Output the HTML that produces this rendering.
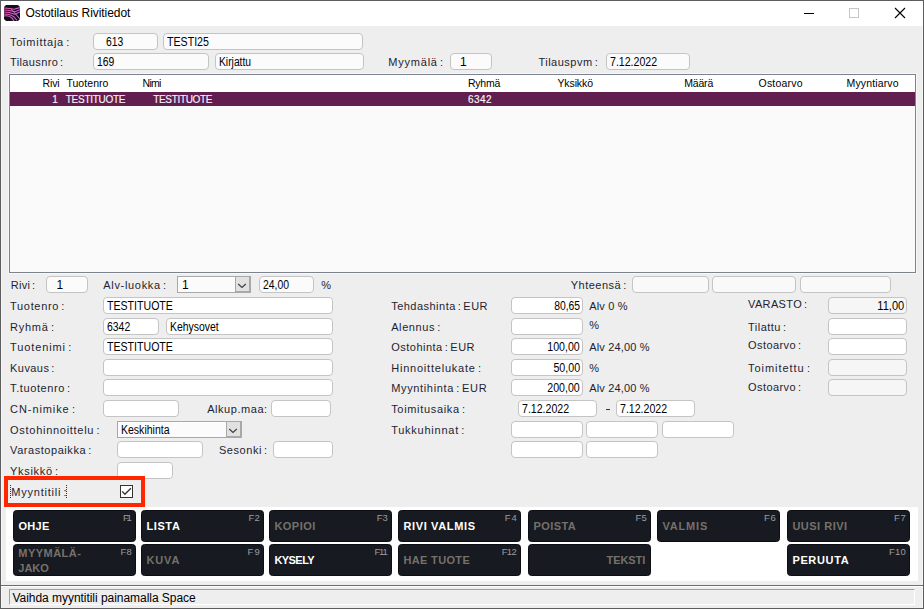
<!DOCTYPE html>
<html><head><meta charset="utf-8"><style>
html,body{margin:0;padding:0;width:924px;height:609px;overflow:hidden;background:#eeeeee}
body{position:relative;font-family:'Liberation Sans', sans-serif}
.r{position:absolute}
.tx{position:absolute;white-space:nowrap;font-family:'Liberation Sans', sans-serif}
</style></head><body>
<div class="r" style="left:0px;top:0px;width:924px;height:609px;background:#eeeeee"></div>
<div class="r" style="left:0px;top:0px;width:924px;height:26px;background:#ffffff"></div>
<div class="r" style="left:0px;top:0px;width:924px;height:1px;background:#5e5e5e"></div>
<div class="r" style="left:0px;top:0px;width:1px;height:609px;background:#5e5e5e"></div>
<div class="r" style="left:1px;top:26px;width:1px;height:582px;background:#f5f5f5"></div>
<div class="r" style="left:923px;top:0px;width:1px;height:609px;background:#5e5e5e"></div>
<div class="r" style="left:922px;top:26px;width:1px;height:582px;background:#f5f5f5"></div>
<div class="r" style="left:0px;top:608px;width:924px;height:1px;background:#5e5e5e"></div>
<svg class="r" style="left:4px;top:5px" width="16" height="16" viewBox="0 0 16 16">
<path d="M2 0 H14 L16 2 V14 L14 16 H2 L0 14 V2 Z" fill="#111116"/>
<defs><linearGradient id="ig" x1="0" x2="1"><stop offset="0" stop-color="#f058b0"/><stop offset="1" stop-color="#d060f0"/></linearGradient></defs>
<g stroke="url(#ig)" stroke-width="1.05" fill="none">
<path d="M0 3 C5 3 8 4.2 10 4.2 L16 2.6"/>
<path d="M0 5 C5 5 8 6.2 11 6.8 L16 4.8"/>
<path d="M0 7 C5 7 8 8.2 11 9.3 L16 7"/>
<path d="M0 9 C4 9 7.5 10 10 12 L13 15.5"/>
<path d="M0 11 C3 10.5 6 11 8 13.2 L10 16"/>
<path d="M7 4 C11 8 13 11 15.8 13.8"/>
</g></svg>
<div class="tx" style="left:25.50px;top:7px;font-size:12px;line-height:12px;color:#000000;letter-spacing:-0.060px;word-spacing:0px;font-weight:normal;">Ostotilaus Rivitiedot</div>
<div class="r" style="left:804px;top:13px;width:10px;height:1px;background:#000"></div>
<div class="r" style="left:849px;top:8px;width:10px;height:10px;border:1px solid #c6c6c6;box-sizing:border-box"></div>
<svg class="r" style="left:894px;top:7px" width="12" height="12" viewBox="0 0 12 12"><path d="M1 1 L11 11 M11 1 L1 11" stroke="#000" stroke-width="1.1"/></svg>
<div class="tx" style="left:10.00px;top:37px;font-size:11px;line-height:11px;color:#1e1e30;letter-spacing:0.753px;word-spacing:-1.5px;font-weight:normal;">Toimittaja :</div>
<div class="tx" style="left:10.00px;top:57px;font-size:11px;line-height:11px;color:#1e1e30;letter-spacing:0.371px;word-spacing:-1.5px;font-weight:normal;">Tilausnro :</div>
<div class="r" style="left:93px;top:33px;width:65px;height:17px;background:#fbfbfb;border:1px solid #c4c4c4;border-radius:4px;box-sizing:border-box"></div>
<div class="tx" style="left:105.60px;top:36px;font-size:12px;line-height:12px;color:#000000;letter-spacing:0.000px;word-spacing:0px;font-weight:normal;transform:scaleX(0.8650);transform-origin:0.00px 0;">613</div>
<div class="r" style="left:163px;top:33px;width:200px;height:17px;background:#fbfbfb;border:1px solid #c4c4c4;border-radius:4px;box-sizing:border-box"></div>
<div class="tx" style="left:167.00px;top:36px;font-size:12px;line-height:12px;color:#000000;letter-spacing:0.000px;word-spacing:0px;font-weight:normal;transform:scaleX(0.8851);transform-origin:0.00px 0;">TESTI25</div>
<div class="r" style="left:93px;top:53px;width:116px;height:17px;background:#fbfbfb;border:1px solid #c4c4c4;border-radius:4px;box-sizing:border-box"></div>
<div class="tx" style="left:96.60px;top:56px;font-size:12px;line-height:12px;color:#000000;letter-spacing:0.000px;word-spacing:0px;font-weight:normal;transform:scaleX(0.8650);transform-origin:0.00px 0;">169</div>
<div class="r" style="left:215px;top:53px;width:149px;height:17px;background:#fbfbfb;border:1px solid #c4c4c4;border-radius:4px;box-sizing:border-box"></div>
<div class="tx" style="left:218.60px;top:56px;font-size:12px;line-height:12px;color:#000000;letter-spacing:0.000px;word-spacing:0px;font-weight:normal;transform:scaleX(0.8589);transform-origin:0.00px 0;">Kirjattu</div>
<div class="tx" style="left:388.30px;top:57px;font-size:11px;line-height:11px;color:#1e1e30;letter-spacing:0.780px;word-spacing:-1.5px;font-weight:normal;">Myymälä :</div>
<div class="r" style="left:450px;top:53px;width:42px;height:17px;background:#fbfbfb;border:1px solid #c4c4c4;border-radius:4px;box-sizing:border-box"></div>
<div class="tx" style="left:460.00px;top:56px;font-size:12px;line-height:12px;color:#000000;letter-spacing:0.000px;word-spacing:0px;font-weight:normal;">1</div>
<div class="tx" style="left:538.40px;top:57px;font-size:11px;line-height:11px;color:#1e1e30;letter-spacing:0.503px;word-spacing:-1.5px;font-weight:normal;">Tilauspvm :</div>
<div class="r" style="left:606px;top:53px;width:84px;height:17px;background:#fbfbfb;border:1px solid #c4c4c4;border-radius:4px;box-sizing:border-box"></div>
<div class="tx" style="left:609.60px;top:56px;font-size:12px;line-height:12px;color:#000000;letter-spacing:0.000px;word-spacing:0px;font-weight:normal;transform:scaleX(0.8825);transform-origin:0.00px 0;">7.12.2022</div>
<div class="r" style="left:8px;top:73px;width:909px;height:201px;background:#f8f8f8"></div>
<div class="r" style="left:9px;top:74px;width:907px;height:199px;background:#fafafa;border:1px solid #7c828e;box-sizing:border-box"></div>
<div class="r" style="left:10px;top:75px;width:905px;height:17px;background:#ffffff"></div>
<div class="r" style="left:10px;top:92px;width:905px;height:14px;background:#631e50"></div>
<div class="tx" style="left:42.60px;top:78px;font-size:10.5px;line-height:10.5px;color:#000;letter-spacing:-0.189px;word-spacing:0px;font-weight:normal;">Rivi</div>
<div class="tx" style="left:66.40px;top:78px;font-size:10.5px;line-height:10.5px;color:#000;letter-spacing:0.058px;word-spacing:0px;font-weight:normal;">Tuotenro</div>
<div class="tx" style="left:142.60px;top:78px;font-size:10.5px;line-height:10.5px;color:#000;letter-spacing:-0.754px;word-spacing:0px;font-weight:normal;">Nimi</div>
<div class="tx" style="left:468.00px;top:78px;font-size:10.5px;line-height:10.5px;color:#000;letter-spacing:-0.230px;word-spacing:0px;font-weight:normal;">Ryhmä</div>
<div class="tx" style="left:557.40px;top:78px;font-size:10.5px;line-height:10.5px;color:#000;letter-spacing:-0.089px;word-spacing:0px;font-weight:normal;">Yksikkö</div>
<div class="tx" style="left:684.30px;top:78px;font-size:10.5px;line-height:10.5px;color:#000;letter-spacing:-0.206px;word-spacing:0px;font-weight:normal;">Määrä</div>
<div class="tx" style="left:758.50px;top:78px;font-size:10.5px;line-height:10.5px;color:#000;letter-spacing:0.220px;word-spacing:0px;font-weight:normal;">Ostoarvo</div>
<div class="tx" style="left:846.50px;top:78px;font-size:10.5px;line-height:10.5px;color:#000;letter-spacing:0.142px;word-spacing:0px;font-weight:normal;">Myyntiarvo</div>
<div class="tx" style="left:52.30px;top:95px;font-size:10px;line-height:10px;color:#f8f4f8;letter-spacing:0.000px;word-spacing:0px;font-weight:normal;-webkit-text-stroke:0.15px #f8f4f8;">1</div>
<div class="tx" style="left:65.80px;top:95px;font-size:10px;line-height:10px;color:#f8f4f8;letter-spacing:-0.284px;word-spacing:0px;font-weight:normal;-webkit-text-stroke:0.15px #f8f4f8;">TESTITUOTE</div>
<div class="tx" style="left:153.20px;top:95px;font-size:10px;line-height:10px;color:#f8f4f8;letter-spacing:-0.328px;word-spacing:0px;font-weight:normal;-webkit-text-stroke:0.15px #f8f4f8;">TESTITUOTE</div>
<div class="tx" style="left:468.00px;top:95px;font-size:10px;line-height:10px;color:#f8f4f8;letter-spacing:0.438px;word-spacing:0px;font-weight:normal;-webkit-text-stroke:0.15px #f8f4f8;">6342</div>
<div class="tx" style="left:10.70px;top:280px;font-size:11px;line-height:11px;color:#1e1e30;letter-spacing:0.282px;word-spacing:-1.5px;font-weight:normal;">Rivi :</div>
<div class="r" style="left:46px;top:276px;width:42px;height:17px;background:#fbfbfb;border:1px solid #c4c4c4;border-radius:4px;box-sizing:border-box"></div>
<div class="tx" style="left:56.50px;top:279px;font-size:12px;line-height:12px;color:#000000;letter-spacing:0.000px;word-spacing:0px;font-weight:normal;">1</div>
<div class="tx" style="left:103.30px;top:280px;font-size:11px;line-height:11px;color:#1e1e30;letter-spacing:0.673px;word-spacing:-1.5px;font-weight:normal;">Alv-luokka :</div>
<div class="r" style="left:177px;top:276px;width:74px;height:17px;background:#fbfbfb;border:1px solid #a8a8a8;box-sizing:border-box"></div>
<div class="r" style="left:178px;top:277px;width:57px;height:1px;background:#ffffff"></div>
<div class="r" style="left:235px;top:276px;width:16px;height:17px;background:#e1e1e1;border:1px solid #a8a8a8;border-right-width:2px;border-bottom-width:2px;box-sizing:border-box"></div>
<svg class="r" style="left:237px;top:282.0px" width="10" height="8" viewBox="0 0 10 8"><path d="M1.2 2 L5 5.5 L8.8 2" stroke="#404040" stroke-width="1.2" fill="none"/></svg>
<div class="tx" style="left:182.00px;top:279px;font-size:12px;line-height:12px;color:#000000;letter-spacing:0.000px;word-spacing:0px;font-weight:normal;">1</div>
<div class="r" style="left:259px;top:276px;width:55px;height:17px;background:#fbfbfb;border:1px solid #c4c4c4;border-radius:4px;box-sizing:border-box"></div>
<div class="tx" style="left:262.80px;top:279px;font-size:12px;line-height:12px;color:#000000;letter-spacing:0.000px;word-spacing:0px;font-weight:normal;transform:scaleX(0.8697);transform-origin:0.00px 0;">24,00</div>
<div class="tx" style="left:321.20px;top:280px;font-size:11px;line-height:11px;color:#1e1e30;letter-spacing:0.000px;word-spacing:0px;font-weight:normal;">%</div>
<div class="tx" style="left:570.80px;top:280px;font-size:11px;line-height:11px;color:#1e1e30;letter-spacing:0.485px;word-spacing:-1.5px;font-weight:normal;">Yhteensä :</div>
<div class="r" style="left:632px;top:276px;width:77px;height:17px;background:#f9f9f9;border:1px solid #c4c4c4;border-radius:4px;box-sizing:border-box"></div>
<div class="r" style="left:712px;top:276px;width:84px;height:17px;background:#f9f9f9;border:1px solid #c4c4c4;border-radius:4px;box-sizing:border-box"></div>
<div class="r" style="left:800px;top:276px;width:91px;height:17px;background:#f9f9f9;border:1px solid #c4c4c4;border-radius:4px;box-sizing:border-box"></div>
<div class="tx" style="left:10.10px;top:301px;font-size:11px;line-height:11px;color:#1e1e30;letter-spacing:0.669px;word-spacing:-1.5px;font-weight:normal;">Tuotenro :</div>
<div class="tx" style="left:10.10px;top:322px;font-size:11px;line-height:11px;color:#1e1e30;letter-spacing:0.734px;word-spacing:-1.5px;font-weight:normal;">Ryhmä :</div>
<div class="tx" style="left:10.10px;top:342px;font-size:11px;line-height:11px;color:#1e1e30;letter-spacing:0.866px;word-spacing:-1.5px;font-weight:normal;">Tuotenimi :</div>
<div class="tx" style="left:10.10px;top:363px;font-size:11px;line-height:11px;color:#1e1e30;letter-spacing:0.422px;word-spacing:-1.5px;font-weight:normal;">Kuvaus :</div>
<div class="tx" style="left:10.10px;top:383px;font-size:11px;line-height:11px;color:#1e1e30;letter-spacing:0.593px;word-spacing:-1.5px;font-weight:normal;">T.tuotenro :</div>
<div class="r" style="left:103px;top:297px;width:230px;height:17px;background:#fff;border:1px solid #c4c4c4;border-radius:4px;box-sizing:border-box"></div>
<div class="tx" style="left:107.30px;top:300px;font-size:12px;line-height:12px;color:#000000;letter-spacing:0.000px;word-spacing:0px;font-weight:normal;transform:scaleX(0.8826);transform-origin:0.00px 0;">TESTITUOTE</div>
<div class="r" style="left:103px;top:318px;width:56px;height:17px;background:#fff;border:1px solid #c4c4c4;border-radius:4px;box-sizing:border-box"></div>
<div class="tx" style="left:106.80px;top:321px;font-size:12px;line-height:12px;color:#000000;letter-spacing:0.000px;word-spacing:0px;font-weight:normal;transform:scaleX(0.8697);transform-origin:0.00px 0;">6342</div>
<div class="r" style="left:166px;top:318px;width:167px;height:17px;background:#fff;border:1px solid #c4c4c4;border-radius:4px;box-sizing:border-box"></div>
<div class="tx" style="left:169.70px;top:321px;font-size:12px;line-height:12px;color:#000000;letter-spacing:0.000px;word-spacing:0px;font-weight:normal;transform:scaleX(0.8677);transform-origin:0.00px 0;">Kehysovet</div>
<div class="r" style="left:103px;top:338px;width:230px;height:17px;background:#fff;border:1px solid #c4c4c4;border-radius:4px;box-sizing:border-box"></div>
<div class="tx" style="left:107.30px;top:341px;font-size:12px;line-height:12px;color:#000000;letter-spacing:0.000px;word-spacing:0px;font-weight:normal;transform:scaleX(0.8826);transform-origin:0.00px 0;">TESTITUOTE</div>
<div class="r" style="left:103px;top:359px;width:230px;height:17px;background:#fff;border:1px solid #c4c4c4;border-radius:4px;box-sizing:border-box"></div>
<div class="r" style="left:103px;top:379px;width:230px;height:17px;background:#fff;border:1px solid #c4c4c4;border-radius:4px;box-sizing:border-box"></div>
<div class="tx" style="left:10.10px;top:404px;font-size:11px;line-height:11px;color:#1e1e30;letter-spacing:0.911px;word-spacing:-1.5px;font-weight:normal;">CN-nimike :</div>
<div class="r" style="left:103px;top:400px;width:76px;height:17px;background:#fff;border:1px solid #c4c4c4;border-radius:4px;box-sizing:border-box"></div>
<div class="tx" style="left:207.20px;top:404px;font-size:11px;line-height:11px;color:#1e1e30;letter-spacing:0.548px;word-spacing:-1.5px;font-weight:normal;">Alkup.maa:</div>
<div class="r" style="left:271px;top:400px;width:60px;height:17px;background:#fff;border:1px solid #c4c4c4;border-radius:4px;box-sizing:border-box"></div>
<div class="tx" style="left:10.10px;top:425px;font-size:11px;line-height:11px;color:#1e1e30;letter-spacing:0.710px;word-spacing:-1.5px;font-weight:normal;">Ostohinnoittelu :</div>
<div class="r" style="left:117px;top:421px;width:125px;height:17px;background:#fbfbfb;border:1px solid #a8a8a8;box-sizing:border-box"></div>
<div class="r" style="left:118px;top:422px;width:108px;height:1px;background:#ffffff"></div>
<div class="r" style="left:226px;top:421px;width:16px;height:17px;background:#e1e1e1;border:1px solid #a8a8a8;border-right-width:2px;border-bottom-width:2px;box-sizing:border-box"></div>
<svg class="r" style="left:228px;top:427.0px" width="10" height="8" viewBox="0 0 10 8"><path d="M1.2 2 L5 5.5 L8.8 2" stroke="#404040" stroke-width="1.2" fill="none"/></svg>
<div class="tx" style="left:121.20px;top:424px;font-size:12px;line-height:12px;color:#000000;letter-spacing:0.000px;word-spacing:0px;font-weight:normal;transform:scaleX(0.8763);transform-origin:0.00px 0;">Keskihinta</div>
<div class="tx" style="left:10.10px;top:445px;font-size:11px;line-height:11px;color:#1e1e30;letter-spacing:0.547px;word-spacing:-1.5px;font-weight:normal;">Varastopaikka :</div>
<div class="r" style="left:117px;top:441px;width:86px;height:17px;background:#fff;border:1px solid #c4c4c4;border-radius:4px;box-sizing:border-box"></div>
<div class="tx" style="left:218.90px;top:445px;font-size:11px;line-height:11px;color:#1e1e30;letter-spacing:0.564px;word-spacing:-1.5px;font-weight:normal;">Sesonki :</div>
<div class="r" style="left:273px;top:441px;width:60px;height:17px;background:#fff;border:1px solid #c4c4c4;border-radius:4px;box-sizing:border-box"></div>
<div class="tx" style="left:10.10px;top:466px;font-size:11px;line-height:11px;color:#1e1e30;letter-spacing:0.681px;word-spacing:-1.5px;font-weight:normal;">Yksikkö :</div>
<div class="r" style="left:117px;top:462px;width:56px;height:17px;background:#fff;border:1px solid #c4c4c4;border-radius:4px;box-sizing:border-box"></div>
<div class="tx" style="left:391.20px;top:301px;font-size:11px;line-height:11px;color:#1e1e30;letter-spacing:0.477px;word-spacing:-1.5px;font-weight:normal;">Tehdashinta : EUR</div>
<div class="r" style="left:511px;top:297px;width:72px;height:17px;background:#ffffff;border:1px solid #c4c4c4;border-radius:4px;box-sizing:border-box"></div>
<div class="tx" style="left:549.74px;top:300px;font-size:12px;line-height:12px;color:#000000;letter-spacing:0.000px;word-spacing:0px;font-weight:normal;transform:scaleX(0.8631);transform-origin:30.36px 0;">80,65</div>
<div class="tx" style="left:589.30px;top:301px;font-size:11px;line-height:11px;color:#1e1e30;letter-spacing:0.148px;word-spacing:0px;font-weight:normal;">Alv 0 %</div>
<div class="tx" style="left:391.20px;top:322px;font-size:11px;line-height:11px;color:#1e1e30;letter-spacing:0.587px;word-spacing:-1.5px;font-weight:normal;">Alennus :</div>
<div class="r" style="left:511px;top:318px;width:72px;height:17px;background:#ffffff;border:1px solid #c4c4c4;border-radius:4px;box-sizing:border-box"></div>
<div class="tx" style="left:589.30px;top:320px;font-size:11px;line-height:11px;color:#1e1e30;letter-spacing:0.000px;word-spacing:0px;font-weight:normal;">%</div>
<div class="tx" style="left:391.20px;top:342px;font-size:11px;line-height:11px;color:#1e1e30;letter-spacing:0.491px;word-spacing:-1.5px;font-weight:normal;">Ostohinta : EUR</div>
<div class="r" style="left:511px;top:338px;width:72px;height:17px;background:#ffffff;border:1px solid #c4c4c4;border-radius:4px;box-sizing:border-box"></div>
<div class="tx" style="left:543.07px;top:341px;font-size:12px;line-height:12px;color:#000000;letter-spacing:0.000px;word-spacing:0px;font-weight:normal;transform:scaleX(0.8831);transform-origin:37.03px 0;">100,00</div>
<div class="tx" style="left:589.30px;top:342px;font-size:11px;line-height:11px;color:#1e1e30;letter-spacing:0.148px;word-spacing:0px;font-weight:normal;">Alv 24,00 %</div>
<div class="tx" style="left:391.20px;top:363px;font-size:11px;line-height:11px;color:#1e1e30;letter-spacing:0.786px;word-spacing:-1.5px;font-weight:normal;">Hinnoittelukate :</div>
<div class="r" style="left:511px;top:359px;width:72px;height:17px;background:#ffffff;border:1px solid #c4c4c4;border-radius:4px;box-sizing:border-box"></div>
<div class="tx" style="left:549.74px;top:362px;font-size:12px;line-height:12px;color:#000000;letter-spacing:0.000px;word-spacing:0px;font-weight:normal;transform:scaleX(0.8862);transform-origin:30.36px 0;">50,00</div>
<div class="tx" style="left:589.30px;top:363px;font-size:11px;line-height:11px;color:#1e1e30;letter-spacing:0.000px;word-spacing:0px;font-weight:normal;">%</div>
<div class="tx" style="left:391.20px;top:383px;font-size:11px;line-height:11px;color:#1e1e30;letter-spacing:0.651px;word-spacing:-1.5px;font-weight:normal;">Myyntihinta : EUR</div>
<div class="r" style="left:511px;top:379px;width:72px;height:17px;background:#ffffff;border:1px solid #c4c4c4;border-radius:4px;box-sizing:border-box"></div>
<div class="tx" style="left:543.07px;top:382px;font-size:12px;line-height:12px;color:#000000;letter-spacing:0.000px;word-spacing:0px;font-weight:normal;transform:scaleX(0.8831);transform-origin:37.03px 0;">200,00</div>
<div class="tx" style="left:589.30px;top:383px;font-size:11px;line-height:11px;color:#1e1e30;letter-spacing:0.148px;word-spacing:0px;font-weight:normal;">Alv 24,00 %</div>
<div class="tx" style="left:391.20px;top:404px;font-size:11px;line-height:11px;color:#1e1e30;letter-spacing:0.671px;word-spacing:-1.5px;font-weight:normal;">Toimitusaika :</div>
<div class="r" style="left:518px;top:400px;width:79px;height:17px;background:#ffffff;border:1px solid #c4c4c4;border-radius:4px;box-sizing:border-box"></div>
<div class="tx" style="left:521.90px;top:403px;font-size:12px;line-height:12px;color:#000000;letter-spacing:0.000px;word-spacing:0px;font-weight:normal;transform:scaleX(0.8825);transform-origin:0.00px 0;">7.12.2022</div>
<div class="r" style="left:606px;top:409px;width:4px;height:1px;background:#333"></div>
<div class="r" style="left:616px;top:400px;width:79px;height:17px;background:#ffffff;border:1px solid #c4c4c4;border-radius:4px;box-sizing:border-box"></div>
<div class="tx" style="left:620.00px;top:403px;font-size:12px;line-height:12px;color:#000000;letter-spacing:0.000px;word-spacing:0px;font-weight:normal;transform:scaleX(0.8825);transform-origin:0.00px 0;">7.12.2022</div>
<div class="tx" style="left:391.20px;top:425px;font-size:11px;line-height:11px;color:#1e1e30;letter-spacing:0.752px;word-spacing:-1.5px;font-weight:normal;">Tukkuhinnat :</div>
<div class="r" style="left:511px;top:421px;width:72px;height:17px;background:#ffffff;border:1px solid #c4c4c4;border-radius:4px;box-sizing:border-box"></div>
<div class="r" style="left:586px;top:421px;width:72px;height:17px;background:#ffffff;border:1px solid #c4c4c4;border-radius:4px;box-sizing:border-box"></div>
<div class="r" style="left:662px;top:421px;width:72px;height:17px;background:#ffffff;border:1px solid #c4c4c4;border-radius:4px;box-sizing:border-box"></div>
<div class="r" style="left:511px;top:441px;width:72px;height:17px;background:#ffffff;border:1px solid #c4c4c4;border-radius:4px;box-sizing:border-box"></div>
<div class="r" style="left:586px;top:441px;width:72px;height:17px;background:#ffffff;border:1px solid #c4c4c4;border-radius:4px;box-sizing:border-box"></div>
<div class="tx" style="left:748.00px;top:299px;font-size:11px;line-height:11px;color:#1e1e30;letter-spacing:0.362px;word-spacing:-1.5px;font-weight:normal;">VARASTO :</div>
<div class="r" style="left:828px;top:297px;width:79px;height:17px;background:#f6f6f6;border:1px solid #c4c4c4;border-radius:4px;box-sizing:border-box"></div>
<div class="tx" style="left:748.00px;top:322px;font-size:11px;line-height:11px;color:#1e1e30;letter-spacing:0.487px;word-spacing:-1.5px;font-weight:normal;">Tilattu :</div>
<div class="r" style="left:828px;top:318px;width:79px;height:17px;background:#ffffff;border:1px solid #c4c4c4;border-radius:4px;box-sizing:border-box"></div>
<div class="tx" style="left:748.00px;top:340px;font-size:11px;line-height:11px;color:#1e1e30;letter-spacing:0.435px;word-spacing:-1.5px;font-weight:normal;">Ostoarvo :</div>
<div class="r" style="left:828px;top:338px;width:79px;height:17px;background:#ffffff;border:1px solid #c4c4c4;border-radius:4px;box-sizing:border-box"></div>
<div class="tx" style="left:748.00px;top:363px;font-size:11px;line-height:11px;color:#1e1e30;letter-spacing:0.943px;word-spacing:-1.5px;font-weight:normal;">Toimitettu :</div>
<div class="r" style="left:828px;top:359px;width:79px;height:17px;background:#f6f6f6;border:1px solid #c4c4c4;border-radius:4px;box-sizing:border-box"></div>
<div class="tx" style="left:748.00px;top:382px;font-size:11px;line-height:11px;color:#1e1e30;letter-spacing:0.424px;word-spacing:-1.5px;font-weight:normal;">Ostoarvo :</div>
<div class="r" style="left:828px;top:379px;width:79px;height:17px;background:#f6f6f6;border:1px solid #c4c4c4;border-radius:4px;box-sizing:border-box"></div>
<div class="tx" style="left:875.04px;top:300px;font-size:12px;line-height:12px;color:#000000;letter-spacing:0.000px;word-spacing:0px;font-weight:normal;transform:scaleX(0.9197);transform-origin:29.46px 0;">11,00</div>
<div class="r" style="left:4px;top:476px;width:141px;height:31px;border:4px solid #ff2600;box-sizing:border-box"></div>
<div class="tx" style="left:11.30px;top:487px;font-size:11px;line-height:11px;color:#1e1e30;letter-spacing:0.764px;word-spacing:0px;font-weight:normal;">Myyntitili</div>
<div class="tx" style="left:63.60px;top:487px;font-size:11px;line-height:11px;color:#1e1e30;letter-spacing:0.000px;word-spacing:0px;font-weight:normal;">:</div>
<div class="r" style="left:10px;top:485px;width:1px;height:13px;border-left:1px dotted #333"></div>
<div class="r" style="left:66px;top:485px;width:1px;height:13px;border-left:1px dotted #333"></div>
<div class="r" style="left:120px;top:485px;width:13px;height:13px;background:#fff;border:1px solid #333;box-sizing:border-box"></div>
<svg class="r" style="left:120px;top:485px" width="13" height="13" viewBox="0 0 13 13"><path d="M2.2 6.4 L4.9 9.2 L10.9 3.2" stroke="#333" stroke-width="1.35" fill="none"/></svg>
<div class="r" style="left:6px;top:507px;width:912px;height:74px;background:#ffffff"></div>
<div class="r" style="left:13px;top:510px;width:123px;height:32px;background:#171a21;border:1px solid #0c0e13;border-radius:3.5px;box-sizing:border-box"></div>
<div class="tx" style="left:123.10px;top:513px;font-size:9.5px;line-height:9.5px;color:#9a9ca0;letter-spacing:-2.503px;word-spacing:0px;font-weight:normal;">F1</div>
<div class="tx" style="left:18.40px;top:521px;font-size:11px;line-height:11px;color:#ffffff;letter-spacing:0.361px;word-spacing:0px;font-weight:bold;">OHJE</div>
<div class="r" style="left:141px;top:510px;width:123px;height:32px;background:#171a21;border:1px solid #0c0e13;border-radius:3.5px;box-sizing:border-box"></div>
<div class="tx" style="left:248.40px;top:513px;font-size:9.5px;line-height:9.5px;color:#9a9ca0;letter-spacing:0.197px;word-spacing:0px;font-weight:normal;">F2</div>
<div class="tx" style="left:146.40px;top:521px;font-size:11px;line-height:11px;color:#ffffff;letter-spacing:0.621px;word-spacing:0px;font-weight:bold;">LISTA</div>
<div class="r" style="left:269px;top:510px;width:123px;height:32px;background:#171a21;border:1px solid #0c0e13;border-radius:3.5px;box-sizing:border-box"></div>
<div class="tx" style="left:376.80px;top:513px;font-size:9.5px;line-height:9.5px;color:#9a9ca0;letter-spacing:-0.203px;word-spacing:0px;font-weight:normal;">F3</div>
<div class="tx" style="left:274.40px;top:521px;font-size:11px;line-height:11px;color:#75716b;letter-spacing:0.490px;word-spacing:0px;font-weight:bold;">KOPIOI</div>
<div class="r" style="left:398px;top:510px;width:123px;height:32px;background:#171a21;border:1px solid #0c0e13;border-radius:3.5px;box-sizing:border-box"></div>
<div class="tx" style="left:504.80px;top:513px;font-size:9.5px;line-height:9.5px;color:#9a9ca0;letter-spacing:0.797px;word-spacing:0px;font-weight:normal;">F4</div>
<div class="tx" style="left:403.40px;top:521px;font-size:11px;line-height:11px;color:#ffffff;letter-spacing:0.645px;word-spacing:0px;font-weight:bold;">RIVI VALMIS</div>
<div class="r" style="left:528px;top:510px;width:123px;height:32px;background:#171a21;border:1px solid #0c0e13;border-radius:3.5px;box-sizing:border-box"></div>
<div class="tx" style="left:635.40px;top:513px;font-size:9.5px;line-height:9.5px;color:#9a9ca0;letter-spacing:0.197px;word-spacing:0px;font-weight:normal;">F5</div>
<div class="tx" style="left:533.40px;top:521px;font-size:11px;line-height:11px;color:#75716b;letter-spacing:0.442px;word-spacing:0px;font-weight:bold;">POISTA</div>
<div class="r" style="left:657px;top:510px;width:123px;height:32px;background:#171a21;border:1px solid #0c0e13;border-radius:3.5px;box-sizing:border-box"></div>
<div class="tx" style="left:764.10px;top:513px;font-size:9.5px;line-height:9.5px;color:#9a9ca0;letter-spacing:0.497px;word-spacing:0px;font-weight:normal;">F6</div>
<div class="tx" style="left:662.40px;top:521px;font-size:11px;line-height:11px;color:#75716b;letter-spacing:0.839px;word-spacing:0px;font-weight:bold;">VALMIS</div>
<div class="r" style="left:787px;top:510px;width:123px;height:32px;background:#171a21;border:1px solid #0c0e13;border-radius:3.5px;box-sizing:border-box"></div>
<div class="tx" style="left:894.10px;top:513px;font-size:9.5px;line-height:9.5px;color:#9a9ca0;letter-spacing:0.497px;word-spacing:0px;font-weight:normal;">F7</div>
<div class="tx" style="left:792.40px;top:521px;font-size:11px;line-height:11px;color:#75716b;letter-spacing:0.503px;word-spacing:0px;font-weight:bold;">UUSI RIVI</div>
<div class="r" style="left:13px;top:544px;width:123px;height:32px;background:#171a21;border:1px solid #0c0e13;border-radius:3.5px;box-sizing:border-box"></div>
<div class="tx" style="left:120.40px;top:547px;font-size:9.5px;line-height:9.5px;color:#9a9ca0;letter-spacing:0.197px;word-spacing:0px;font-weight:normal;">F8</div>
<div class="tx" style="left:18.30px;top:548px;font-size:11px;line-height:11px;color:#75716b;letter-spacing:0.470px;word-spacing:0px;font-weight:bold;">MYYMÄLÄ-</div>
<div class="tx" style="left:18.30px;top:563px;font-size:11px;line-height:11px;color:#75716b;letter-spacing:-0.002px;word-spacing:0px;font-weight:bold;">JAKO</div>
<div class="r" style="left:141px;top:544px;width:123px;height:32px;background:#171a21;border:1px solid #0c0e13;border-radius:3.5px;box-sizing:border-box"></div>
<div class="tx" style="left:247.50px;top:547px;font-size:9.5px;line-height:9.5px;color:#9a9ca0;letter-spacing:1.097px;word-spacing:0px;font-weight:normal;">F9</div>
<div class="tx" style="left:146.40px;top:555px;font-size:11px;line-height:11px;color:#75716b;letter-spacing:0.897px;word-spacing:0px;font-weight:bold;">KUVA</div>
<div class="r" style="left:269px;top:544px;width:123px;height:32px;background:#171a21;border:1px solid #0c0e13;border-radius:3.5px;box-sizing:border-box"></div>
<div class="tx" style="left:374.60px;top:547px;font-size:9.5px;line-height:9.5px;color:#9a9ca0;letter-spacing:-1.291px;word-spacing:0px;font-weight:normal;">F11</div>
<div class="tx" style="left:274.40px;top:555px;font-size:11px;line-height:11px;color:#ffffff;letter-spacing:-0.553px;word-spacing:0px;font-weight:bold;">KYSELY</div>
<div class="r" style="left:398px;top:544px;width:123px;height:32px;background:#171a21;border:1px solid #0c0e13;border-radius:3.5px;box-sizing:border-box"></div>
<div class="tx" style="left:501.70px;top:547px;font-size:9.5px;line-height:9.5px;color:#9a9ca0;letter-spacing:-0.693px;word-spacing:0px;font-weight:normal;">F12</div>
<div class="tx" style="left:403.40px;top:555px;font-size:11px;line-height:11px;color:#75716b;letter-spacing:0.348px;word-spacing:0px;font-weight:bold;">HAE TUOTE</div>
<div class="r" style="left:528px;top:544px;width:123px;height:32px;background:#171a21;border:1px solid #0c0e13;border-radius:3.5px;box-sizing:border-box"></div>
<div class="tx" style="left:606.60px;top:555px;font-size:11px;line-height:11px;color:#75716b;letter-spacing:-0.091px;word-spacing:0px;font-weight:bold;">TEKSTI</div>
<div class="r" style="left:787px;top:544px;width:123px;height:32px;background:#171a21;border:1px solid #0c0e13;border-radius:3.5px;box-sizing:border-box"></div>
<div class="tx" style="left:889.10px;top:547px;font-size:9.5px;line-height:9.5px;color:#9a9ca0;letter-spacing:0.107px;word-spacing:0px;font-weight:normal;">F10</div>
<div class="tx" style="left:792.40px;top:555px;font-size:11px;line-height:11px;color:#ffffff;letter-spacing:0.649px;word-spacing:0px;font-weight:bold;">PERUUTA</div>
<div class="r" style="left:1px;top:585px;width:922px;height:1px;background:#6e6e6e"></div>
<div class="r" style="left:1px;top:586px;width:922px;height:1px;background:#fdfdfd"></div>
<div class="r" style="left:9px;top:589px;width:906px;height:16px;border-top:1px solid #a0a0a0;border-left:1px solid #a0a0a0;border-right:1px solid #ffffff;border-bottom:1px solid #ffffff;box-sizing:border-box"></div>
<div class="tx" style="left:12.50px;top:592px;font-size:12px;line-height:12px;color:#000;letter-spacing:-0.041px;word-spacing:0px;font-weight:normal;">Vaihda myyntitili painamalla Space</div>
</body></html>
